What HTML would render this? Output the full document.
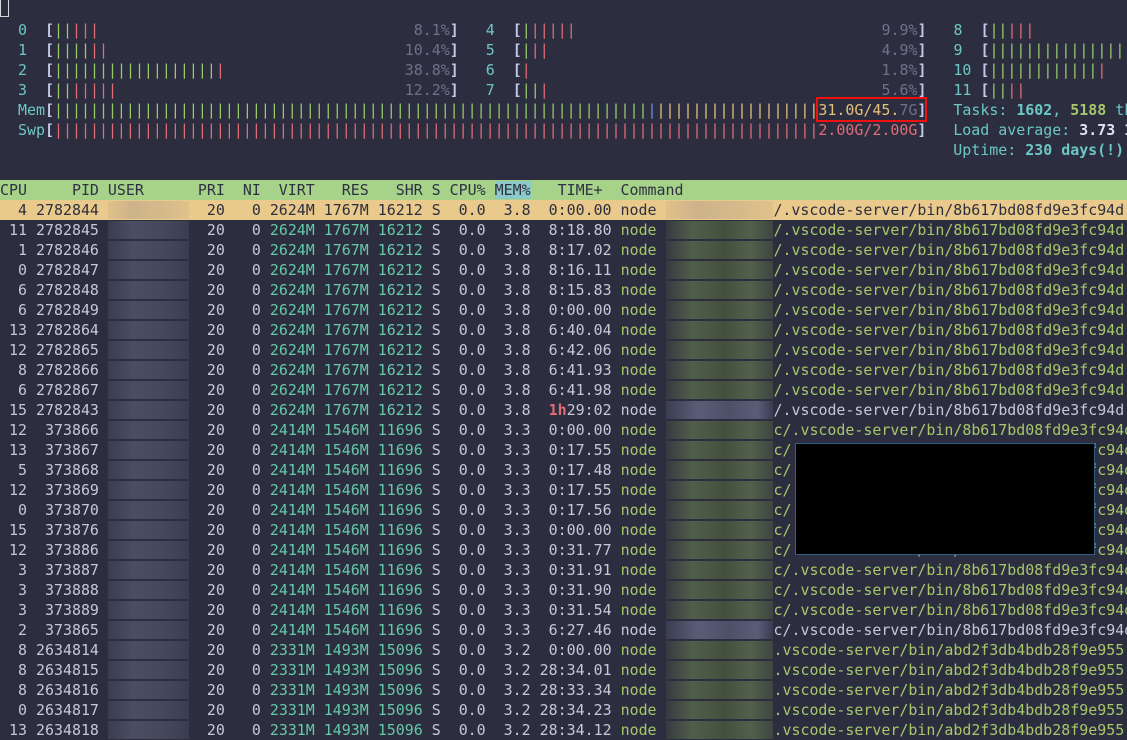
<!DOCTYPE html>
<html><head><meta charset="utf-8">
<style>
body{margin:0;width:1127px;height:729px;background:#2c2e3f;overflow:hidden;position:relative;font:14.95px/20px "DejaVu Sans Mono","Liberation Mono",monospace;color:#c6c8d8}
.l{position:absolute;left:0;white-space:pre;height:20px;width:1127px;overflow:hidden}
.lb{color:#6cc7c4}.br{color:#c3c6e4;font-weight:bold}.pc{color:#6e7189}
.G{color:#97c96b}.R{color:#e06c75}.B{color:#6f8fe0}.Y{color:#e5c07b}
.c{color:#65c8a8}.g{color:#a6c76a}.bd{font-weight:bold}
.u{background:linear-gradient(90deg,#3a3d50,#4b4e62 30%,#45485b 70%,#3a3d50)}
.bg{background:linear-gradient(90deg,#363a40,#4f5e4a 25%,#44503f 55%,#52604a 80%,#3d4540)}
.bw{background:linear-gradient(90deg,#3a3d50,#5a5d78 30%,#4d5068 60%,#5a5d78 85%,#3a3d50)}
.hl{background:#e9c98c;color:#2d2f3c}.hl .u,.hl .bg{background:linear-gradient(90deg,#e0c18a,#cdb38a 30%,#d5bb8a 70%,#e0c18a)}
.hd{background:#a6d28a;color:#2f3142}
.mm{background:#8cc9c9}
</style></head><body>
<div style="position:absolute;left:0;top:0;width:7px;height:16px;border:1px solid #d8d8d8;border-top:none"></div>
<div class="l" style="top:20px">  <span class="lb">0</span>  <span class="br">[</span><span class="G">||</span><span class="R">|||</span>                                   <span class="pc">8.1%</span><span class="br">]</span>   <span class="lb">4</span>  <span class="br">[</span><span class="G">|</span><span class="R">|||||</span>                                  <span class="pc">9.9%</span><span class="br">]</span>   <span class="lb">8</span>  <span class="br">[</span><span class="G">||</span><span class="R">|||</span></div>
<div class="l" style="top:40px">  <span class="lb">1</span>  <span class="br">[</span><span class="G">||||</span><span class="R">||</span>                                 <span class="pc">10.4%</span><span class="br">]</span>   <span class="lb">5</span>  <span class="br">[</span><span class="G">|</span><span class="R">||</span>                                     <span class="pc">4.9%</span><span class="br">]</span>   <span class="lb">9</span>  <span class="br">[</span><span class="G">|||||||||||||||</span></div>
<div class="l" style="top:60px">  <span class="lb">2</span>  <span class="br">[</span><span class="G">||||||||||||||||||</span><span class="R">|</span>                    <span class="pc">38.8%</span><span class="br">]</span>   <span class="lb">6</span>  <span class="br">[</span><span class="R">|</span>                                       <span class="pc">1.8%</span><span class="br">]</span>   <span class="lb">10</span> <span class="br">[</span><span class="G">||||||||||||</span><span class="R">|</span></div>
<div class="l" style="top:80px">  <span class="lb">3</span>  <span class="br">[</span><span class="G">||</span><span class="R">|||||</span>                                <span class="pc">12.2%</span><span class="br">]</span>   <span class="lb">7</span>  <span class="br">[</span><span class="G">||</span><span class="R">|</span>                                     <span class="pc">5.6%</span><span class="br">]</span>   <span class="lb">11</span> <span class="br">[</span><span class="G">||</span><span class="R">||</span></div>
<div class="l" style="top:100px">  <span class="lb">Mem</span><span class="br">[</span><span class="G">||||||||||||||||||||||||||||||||||||||||||||||||||||||||||||||||||</span><span class="B">|</span><span class="Y">||||||||||||||||||</span><span class="Y">31.0G/45.</span><span class="pc">7G</span><span class="br">]</span>   <span class="lb">Tasks: </span><span class="lb bd">1602</span><span class="lb">, </span><span class="g bd">5188</span><span class="lb"> thr</span></div>
<div class="l" style="top:120px">  <span class="lb">Swp</span><span class="br">[</span><span class="R">|||||||||||||||||||||||||||||||||||||||||||||||||||||||||||||||||||||||||||||||||||||2.00G/2.00G</span><span class="br">]</span>   <span class="lb">Load average: </span><span class="bd" style="color:#e0e2f0">3.73 1</span></div>
<div class="l" style="top:140px">                                                                                                          <span class="lb">Uptime: </span><span class="lb bd">230 days(!)</span></div>
<div style="position:absolute;left:816px;top:97px;width:107px;height:21px;border:2px solid #f01010"></div>

<div class="l hd" style="top:180px">CPU     PID USER      PRI  NI  VIRT   RES   SHR S CPU% <span class="mm">MEM%</span>   TIME+  Command</div>

<div class="l hl" style="top:200px">  4 2782844 <span class="u">         </span>  20   0 2624M 1767M 16212 S  0.0  3.8  0:00.00 node <span class="bg">            </span>/.vscode-server/bin/8b617bd08fd9e3fc94d</div>
<div class="l" style="top:220px"> 11 2782845 <span class="u">         </span>  20   0 <span class="c">2624M 1767M 16212</span> S  0.0  3.8  8:18.80 <span class="g">node </span><span class="bg">            </span><span class="g">/.vscode-server/bin/8b617bd08fd9e3fc94d</span></div>
<div class="l" style="top:240px">  1 2782846 <span class="u">         </span>  20   0 <span class="c">2624M 1767M 16212</span> S  0.0  3.8  8:17.02 <span class="g">node </span><span class="bg">            </span><span class="g">/.vscode-server/bin/8b617bd08fd9e3fc94d</span></div>
<div class="l" style="top:260px">  0 2782847 <span class="u">         </span>  20   0 <span class="c">2624M 1767M 16212</span> S  0.0  3.8  8:16.11 <span class="g">node </span><span class="bg">            </span><span class="g">/.vscode-server/bin/8b617bd08fd9e3fc94d</span></div>
<div class="l" style="top:280px">  6 2782848 <span class="u">         </span>  20   0 <span class="c">2624M 1767M 16212</span> S  0.0  3.8  8:15.83 <span class="g">node </span><span class="bg">            </span><span class="g">/.vscode-server/bin/8b617bd08fd9e3fc94d</span></div>
<div class="l" style="top:300px">  6 2782849 <span class="u">         </span>  20   0 <span class="c">2624M 1767M 16212</span> S  0.0  3.8  0:00.00 <span class="g">node </span><span class="bg">            </span><span class="g">/.vscode-server/bin/8b617bd08fd9e3fc94d</span></div>
<div class="l" style="top:320px"> 13 2782864 <span class="u">         </span>  20   0 <span class="c">2624M 1767M 16212</span> S  0.0  3.8  6:40.04 <span class="g">node </span><span class="bg">            </span><span class="g">/.vscode-server/bin/8b617bd08fd9e3fc94d</span></div>
<div class="l" style="top:340px"> 12 2782865 <span class="u">         </span>  20   0 <span class="c">2624M 1767M 16212</span> S  0.0  3.8  6:42.06 <span class="g">node </span><span class="bg">            </span><span class="g">/.vscode-server/bin/8b617bd08fd9e3fc94d</span></div>
<div class="l" style="top:360px">  8 2782866 <span class="u">         </span>  20   0 <span class="c">2624M 1767M 16212</span> S  0.0  3.8  6:41.93 <span class="g">node </span><span class="bg">            </span><span class="g">/.vscode-server/bin/8b617bd08fd9e3fc94d</span></div>
<div class="l" style="top:380px">  6 2782867 <span class="u">         </span>  20   0 <span class="c">2624M 1767M 16212</span> S  0.0  3.8  6:41.98 <span class="g">node </span><span class="bg">            </span><span class="g">/.vscode-server/bin/8b617bd08fd9e3fc94d</span></div>
<div class="l" style="top:400px"> 15 2782843 <span class="u">         </span>  20   0 <span class="c">2624M 1767M 16212</span> S  0.0  3.8  <span class="R bd">1h</span>29:02 node <span class="bw">            </span>/.vscode-server/bin/8b617bd08fd9e3fc94d</div>
<div class="l" style="top:420px"> 12  373866 <span class="u">         </span>  20   0 <span class="c">2414M 1546M 11696</span> S  0.0  3.3  0:00.00 <span class="g">node </span><span class="bg">            </span><span class="g">c/.vscode-server/bin/8b617bd08fd9e3fc94d</span></div>
<div class="l" style="top:440px"> 13  373867 <span class="u">         </span>  20   0 <span class="c">2414M 1546M 11696</span> S  0.0  3.3  0:17.55 <span class="g">node </span><span class="bg">            </span><span class="g">c/.vscode-server/bin/8b617bd08fd9e3fc94d</span></div>
<div class="l" style="top:460px">  5  373868 <span class="u">         </span>  20   0 <span class="c">2414M 1546M 11696</span> S  0.0  3.3  0:17.48 <span class="g">node </span><span class="bg">            </span><span class="g">c/.vscode-server/bin/8b617bd08fd9e3fc94d</span></div>
<div class="l" style="top:480px"> 12  373869 <span class="u">         </span>  20   0 <span class="c">2414M 1546M 11696</span> S  0.0  3.3  0:17.55 <span class="g">node </span><span class="bg">            </span><span class="g">c/.vscode-server/bin/8b617bd08fd9e3fc94d</span></div>
<div class="l" style="top:500px">  0  373870 <span class="u">         </span>  20   0 <span class="c">2414M 1546M 11696</span> S  0.0  3.3  0:17.56 <span class="g">node </span><span class="bg">            </span><span class="g">c/.vscode-server/bin/8b617bd08fd9e3fc94d</span></div>
<div class="l" style="top:520px"> 15  373876 <span class="u">         </span>  20   0 <span class="c">2414M 1546M 11696</span> S  0.0  3.3  0:00.00 <span class="g">node </span><span class="bg">            </span><span class="g">c/.vscode-server/bin/8b617bd08fd9e3fc94d</span></div>
<div class="l" style="top:540px"> 12  373886 <span class="u">         </span>  20   0 <span class="c">2414M 1546M 11696</span> S  0.0  3.3  0:31.77 <span class="g">node </span><span class="bg">            </span><span class="g">c/.vscode-server/bin/8b617bd08fd9e3fc94d</span></div>
<div class="l" style="top:560px">  3  373887 <span class="u">         </span>  20   0 <span class="c">2414M 1546M 11696</span> S  0.0  3.3  0:31.91 <span class="g">node </span><span class="bg">            </span><span class="g">c/.vscode-server/bin/8b617bd08fd9e3fc94d</span></div>
<div class="l" style="top:580px">  3  373888 <span class="u">         </span>  20   0 <span class="c">2414M 1546M 11696</span> S  0.0  3.3  0:31.90 <span class="g">node </span><span class="bg">            </span><span class="g">c/.vscode-server/bin/8b617bd08fd9e3fc94d</span></div>
<div class="l" style="top:600px">  3  373889 <span class="u">         </span>  20   0 <span class="c">2414M 1546M 11696</span> S  0.0  3.3  0:31.54 <span class="g">node </span><span class="bg">            </span><span class="g">c/.vscode-server/bin/8b617bd08fd9e3fc94d</span></div>
<div class="l" style="top:620px">  2  373865 <span class="u">         </span>  20   0 <span class="c">2414M 1546M 11696</span> S  0.0  3.3  6:27.46 node <span class="bw">            </span>c/.vscode-server/bin/8b617bd08fd9e3fc94d</div>
<div class="l" style="top:640px">  8 2634814 <span class="u">         </span>  20   0 <span class="c">2331M 1493M 15096</span> S  0.0  3.2  0:00.00 <span class="g">node </span><span class="bg">            </span><span class="g">.vscode-server/bin/abd2f3db4bdb28f9e955</span></div>
<div class="l" style="top:660px">  8 2634815 <span class="u">         </span>  20   0 <span class="c">2331M 1493M 15096</span> S  0.0  3.2 28:34.01 <span class="g">node </span><span class="bg">            </span><span class="g">.vscode-server/bin/abd2f3db4bdb28f9e955</span></div>
<div class="l" style="top:680px">  8 2634816 <span class="u">         </span>  20   0 <span class="c">2331M 1493M 15096</span> S  0.0  3.2 28:33.34 <span class="g">node </span><span class="bg">            </span><span class="g">.vscode-server/bin/abd2f3db4bdb28f9e955</span></div>
<div class="l" style="top:700px">  0 2634817 <span class="u">         </span>  20   0 <span class="c">2331M 1493M 15096</span> S  0.0  3.2 28:34.23 <span class="g">node </span><span class="bg">            </span><span class="g">.vscode-server/bin/abd2f3db4bdb28f9e955</span></div>
<div class="l" style="top:720px"> 13 2634818 <span class="u">         </span>  20   0 <span class="c">2331M 1493M 15096</span> S  0.0  3.2 28:34.12 <span class="g">node </span><span class="bg">            </span><span class="g">.vscode-server/bin/abd2f3db4bdb28f9e955</span></div>

<div style="position:absolute;left:795px;top:443px;width:298px;height:110px;background:#000;border:1px solid #2f5f80"></div>
</body></html>
